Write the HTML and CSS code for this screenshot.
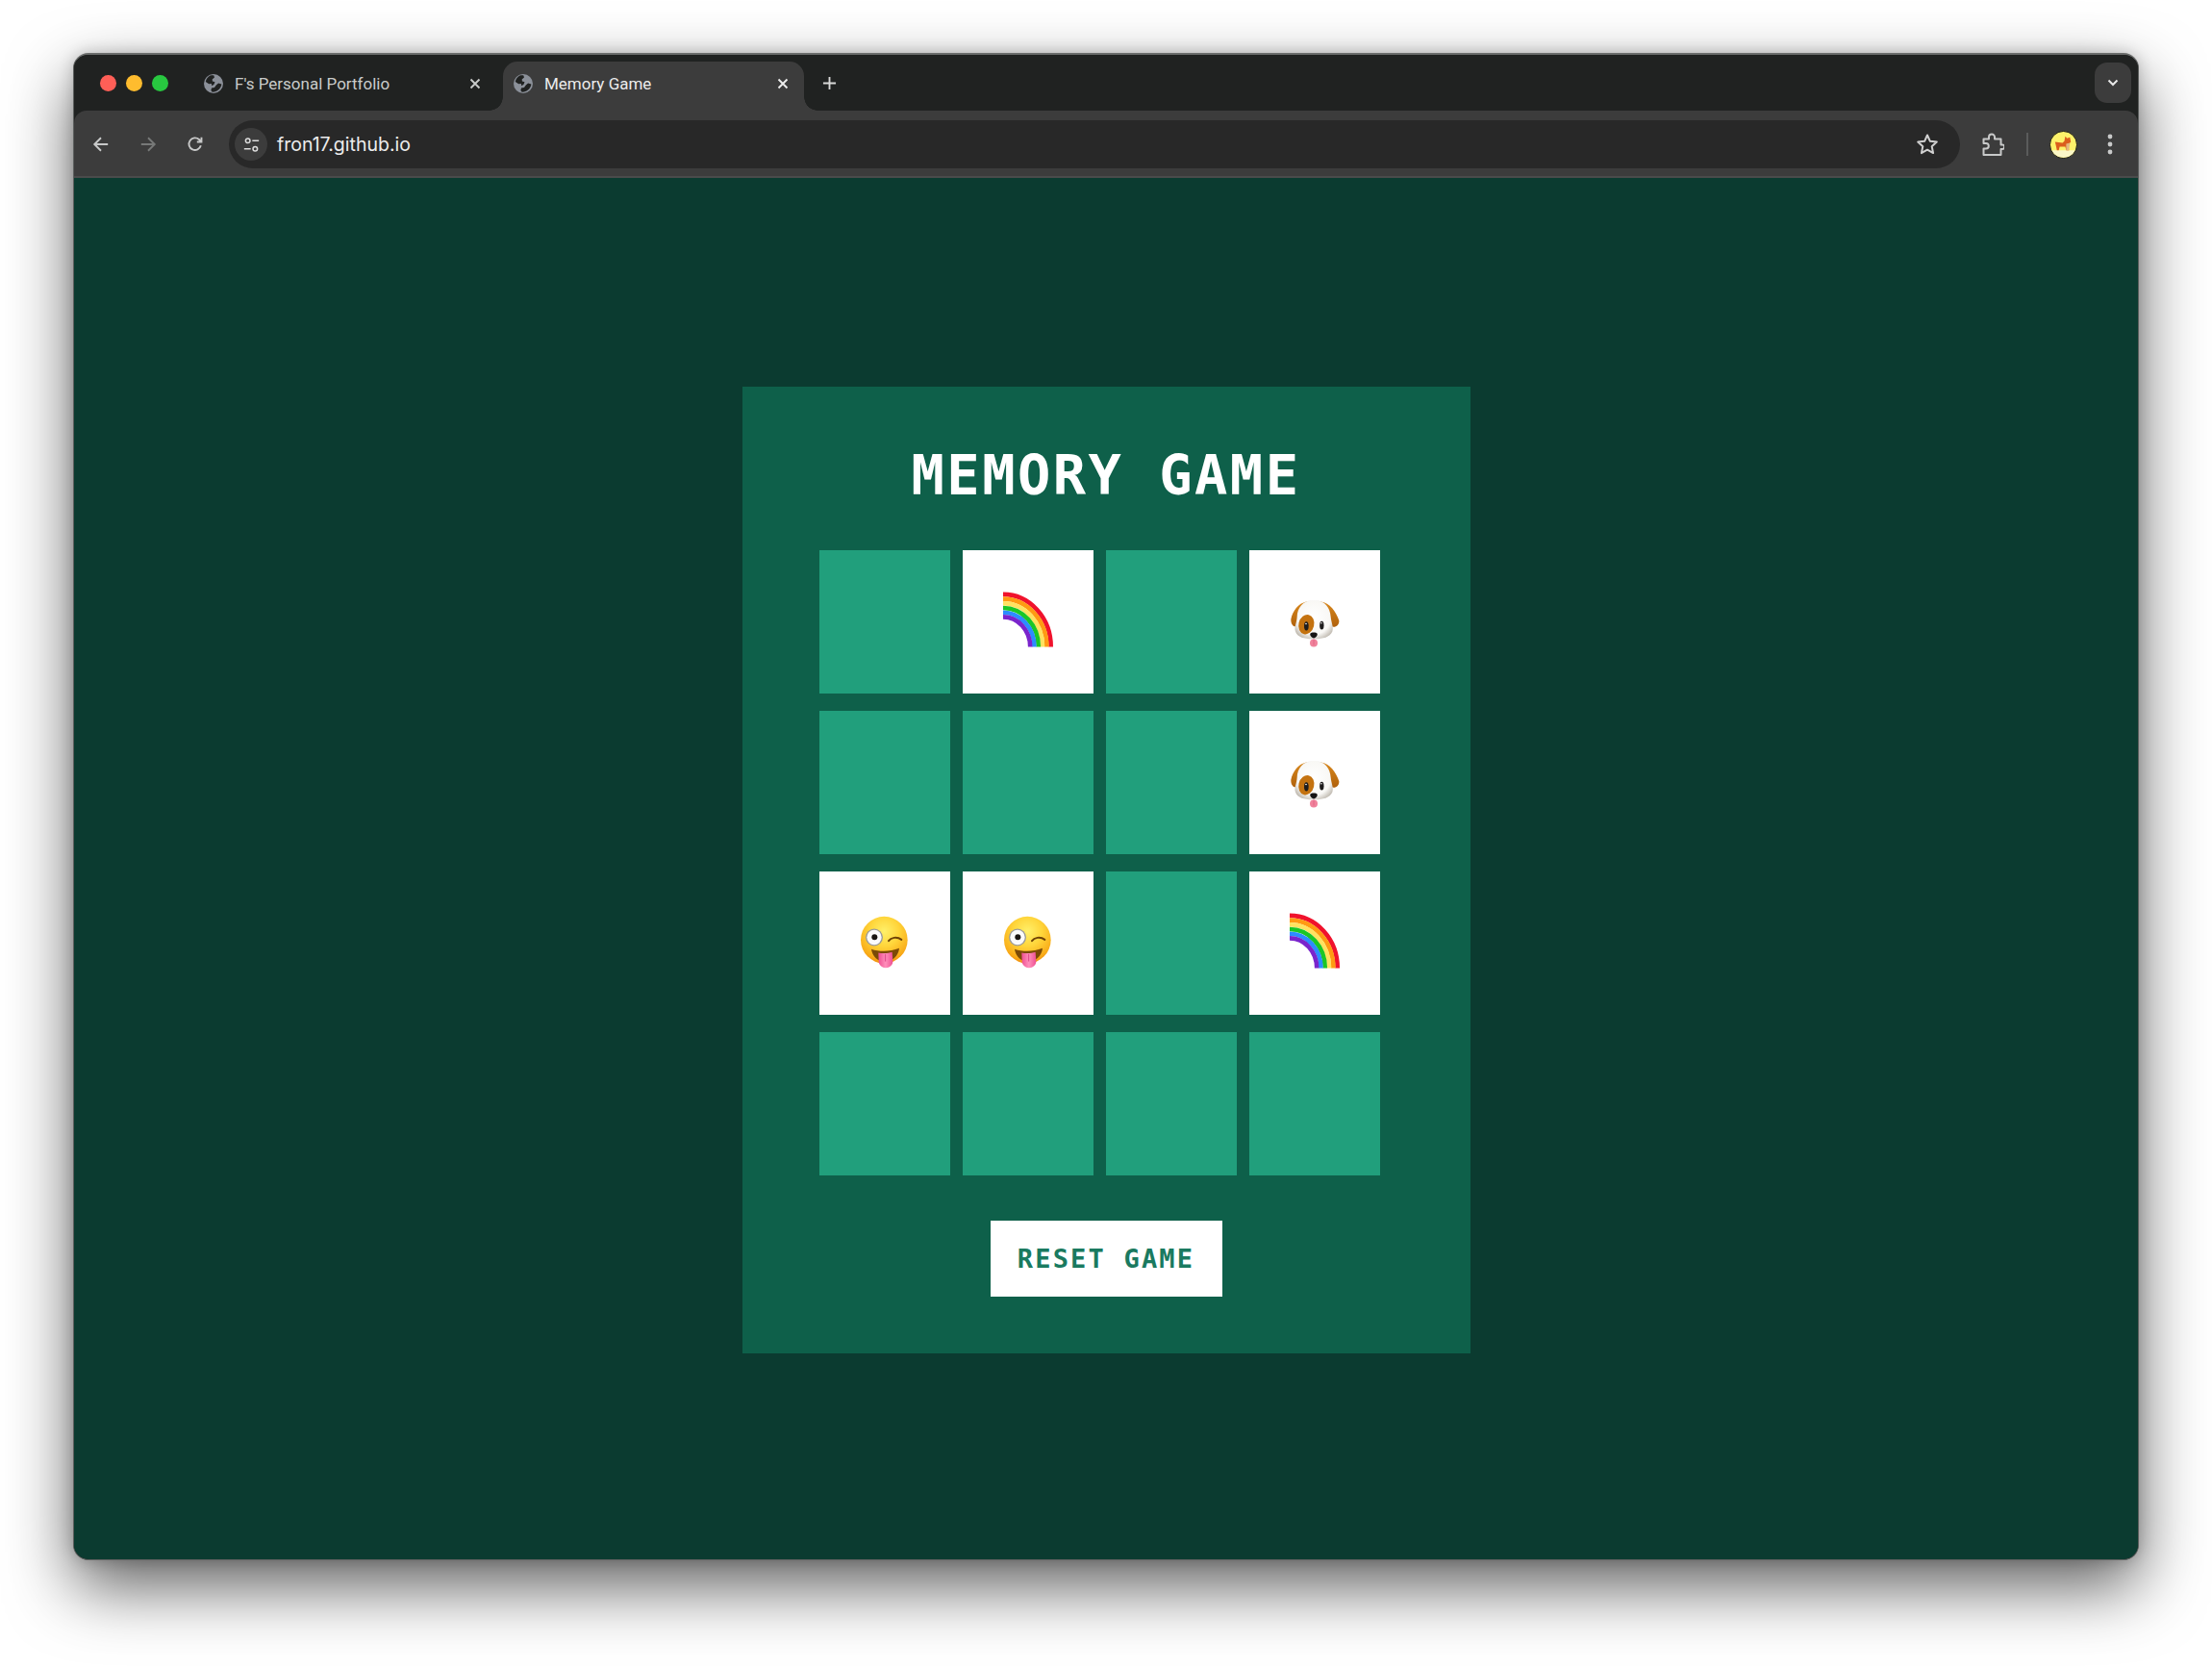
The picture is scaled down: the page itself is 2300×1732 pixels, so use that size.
FILE: index.html
```html
<!DOCTYPE html>
<html lang="en">
<head>
<meta charset="utf-8">
<title>Memory Game</title>
<link rel="stylesheet" href="styles.css">
</head>
<body>
<svg class="defs" width="0" height="0" aria-hidden="true">
  <defs>
    <radialGradient id="faceGrad" cx="50%" cy="32%" r="70%">
      <stop offset="0" stop-color="#fff06a"/>
      <stop offset=".45" stop-color="#ffd53a"/>
      <stop offset=".85" stop-color="#f9ab18"/>
      <stop offset="1" stop-color="#ee8a0c"/>
    </radialGradient>
    <linearGradient id="tongueGrad" x1="0" x2="1" y1="0" y2="0">
      <stop offset="0" stop-color="#ee4f92"/>
      <stop offset=".5" stop-color="#ff8fbb"/>
      <stop offset="1" stop-color="#ee4f92"/>
    </linearGradient>
    <radialGradient id="headGrad" cx="50%" cy="45%" r="62%">
      <stop offset="0" stop-color="#ffffff"/>
      <stop offset=".7" stop-color="#f9f8f5"/>
      <stop offset="1" stop-color="#bdb7ad"/>
    </radialGradient>
    <linearGradient id="earGrad" x1="0" x2="0" y1="0" y2="1">
      <stop offset="0" stop-color="#d9881c"/>
      <stop offset="1" stop-color="#b0610c"/>
    </linearGradient>
    <symbol id="globe" viewBox="0 0 20 20">
      <circle cx="10" cy="10" r="10" fill="#8b9099"/>
      <path d="M6.500 1.600C4 3 2.200 5.200 1.800 8l3.400 2.200 2.600-.2.500 2.300 2.200-1.500 1-2.600-2.600-.7-.2-2L11 3.600 10.400 1.400C9 1.300 7.600 1.400 6.500 1.600Z" fill="#202221"/>
      <path d="M18.400 10.600l-3.300-1.100-2.300 2-1.800 2.400-3 .6-.6 2.500 1 1.600c3.800.6 9.100-2.100 10-8Z" fill="#202221"/>
    </symbol>
    <symbol id="rainbow" viewBox="-5 -5 70 70">
      <g fill="none">
        <path d="M4 1.900A49.700 54.600 0 0 1 53.700 56.500" stroke="#f0122c" stroke-width="4.600"/>
        <path d="M4 6.600A45.400 49.900 0 0 1 49.400 56.500" stroke="#ff9a12" stroke-width="4.600"/>
        <path d="M4 11.300A41.100 45.200 0 0 1 45.100 56.500" stroke="#ffe260" stroke-width="4.600"/>
        <path d="M4 16A36.800 40.500 0 0 1 40.800 56.500" stroke="#1bc625" stroke-width="4.600"/>
        <path d="M4 20.700A32.500 35.800 0 0 1 36.500 56.500" stroke="#2c8cff" stroke-width="4.600"/>
        <path d="M4 25.400A28.200 31.100 0 0 1 32.200 56.500" stroke="#7a24cc" stroke-width="4.600"/>
      </g>
    </symbol>
    <symbol id="dog" viewBox="6 -10.5 210 210">
      <path d="M85 33C60 38 42 62 37 88C36 104 46 115 57 110C62 90 66 62 94 36Z" fill="url(#earGrad)"/>
      <path d="M130 33C158 36 178 65 187 92C188 107 175 115 163 110C159 85 150 58 124 36Z" fill="url(#earGrad)"/>
      <path d="M108 29C142 27 159 50 161 80C163 100 171 112 166 126C158 146 130 150 108 149C85 150 57 146 51 126C46 110 55 100 56 80C57 50 76 27 108 29Z" fill="url(#headGrad)"/>
      <ellipse cx="85" cy="104" rx="24" ry="31" transform="rotate(14 85 104)" fill="#c4720f"/>
      <ellipse cx="85" cy="109" rx="7" ry="14" fill="#1e1c1c"/>
      <circle cx="84" cy="102" r="2.500" fill="#fff"/>
      <ellipse cx="133" cy="107" rx="6.500" ry="13" fill="#1e1c1c"/>
      <circle cx="132" cy="100" r="2.300" fill="#fff"/>
      <ellipse cx="108" cy="162" rx="12" ry="12" fill="#f0829b"/>
      <path d="M108 150V168" stroke="#d95c7b" stroke-width="2"/>
      <path d="M97 133C100 128 116 128 119 133C121 140 112 147 108 147C104 147 95 140 97 133Z" fill="#161414"/>
    </symbol>
    <symbol id="wink" viewBox="0 1.5 210 210">
      <circle cx="103" cy="98" r="73" fill="url(#faceGrad)"/>
      <path d="M63 127C90 136 122 135 150 124C148 148 128 166 106 166C84 166 66 150 63 127Z" fill="#7b4a07"/>
      <path d="M85 138C98 141 116 140 128 136L130 165C130 177 120 185 108 185C96 185 87 177 86 165Z" fill="url(#tongueGrad)"/>
      <path d="M107 142V165" stroke="#d4367c" stroke-width="2.500"/>
      <circle cx="72" cy="90" r="27" fill="#9a9a9a"/>
      <circle cx="72" cy="90" r="23" fill="#fbfbfb"/>
      <circle cx="73" cy="89" r="9" fill="#191512"/>
      <path d="M117 101C124 91 142 86 157 97" fill="none" stroke="#6e4206" stroke-width="6" stroke-linecap="round"/>
    </symbol>
  </defs>
</svg>

<div class="window">
  <header class="tabstrip">
    <div class="lights">
      <span class="light light-red"></span>
      <span class="light light-yellow"></span>
      <span class="light light-green"></span>
    </div>
    <div class="tab">
      <svg class="globe"><use href="#globe"/></svg>
      <span class="tab-title">F's Personal Portfolio</span>
      <svg class="tab-close" viewBox="0 0 12 12"><path d="M1.500 1.500l9 9M10.500 1.500l-9 9"/></svg>
    </div>
    <div class="tab tab-active">
      <svg class="globe"><use href="#globe"/></svg>
      <span class="tab-title">Memory Game</span>
      <svg class="tab-close" viewBox="0 0 12 12"><path d="M1.500 1.500l9 9M10.500 1.500l-9 9"/></svg>
    </div>
    <svg class="new-tab" viewBox="0 0 16 16"><path d="M8 1v14M1 8h14"/></svg>
    <div class="tab-menu">
      <svg class="tab-menu-icon" viewBox="0 0 12 8"><path d="M1.500 1.500L6 6l4.500-4.500"/></svg>
    </div>
  </header>

  <nav class="toolbar">
    <svg class="nav-icon" viewBox="0 0 20 20"><path d="M18 10H3M10 2.500L2.500 10l7.500 7.500"/></svg>
    <svg class="nav-icon nav-dim" viewBox="0 0 20 20"><path d="M2 10h15M10 2.500l7.500 7.500-7.500 7.500"/></svg>
    <svg class="nav-icon" viewBox="0 0 20 20"><path d="M16.500 11.500A7 7 0 1 1 14.500 4.500L17 7M17.200 2v5.200H12"/></svg>
    <div class="omnibox">
      <span class="tune">
        <svg class="tune-icon" viewBox="0 0 20 20"><circle cx="5.500" cy="5" r="2.700"/><path d="M11 5h8M1 15h8"/><circle cx="14.500" cy="15" r="2.700"/></svg>
      </span>
      <span class="url">fron17.github.io</span>
      <svg class="star" viewBox="0 0 24 24"><path d="M12 2.500l2.900 6.300 6.900.8-5.100 4.700 1.400 6.800-6.100-3.400-6.100 3.400 1.400-6.800-5.100-4.700 6.900-.8Z"/></svg>
    </div>
    <svg class="ext" viewBox="0 0 24 26"><path d="M2.500 7.500H8V5.500a3 3 0 0 1 6 0v2h6.500v6h1.500a2.200 2.200 0 0 1 0 4.400h-1.500v6H2.500v-6.400H5a2.800 2.800 0 0 0 0-5.600H2.500Z"/></svg>
    <span class="divider"></span>
    <svg class="avatar" viewBox="0 0 30 30">
      <circle cx="15" cy="15" r="14.500" fill="#fdf16a" stroke="#141414"/>
      <path d="M2.500 21h25a14 14 0 0 1-25 0Z" fill="#fbf7c8"/>
      <path d="M6 12l8 1 2-2 1-5 2 2 3-1 1 5-3 3 1 6h-3l-1-4-6 0-1 4H8l-1-5Z" fill="#db5e1c"/>
      <path d="M18 14l4-1-1 8h-3Z" fill="#e3b77e"/>
    </svg>
    <svg class="dots" viewBox="0 0 6 22"><circle cx="3" cy="3" r="2.400"/><circle cx="3" cy="11" r="2.400"/><circle cx="3" cy="19" r="2.400"/></svg>
  </nav>

  <main class="page">
    <section class="panel">
      <h1 class="title">MEMORY GAME</h1>
      <div class="grid">
        <div class="card"></div>
        <div class="card card-open"><svg class="emoji"><use href="#rainbow"/></svg></div>
        <div class="card"></div>
        <div class="card card-open"><svg class="emoji"><use href="#dog"/></svg></div>
        <div class="card"></div>
        <div class="card"></div>
        <div class="card"></div>
        <div class="card card-open"><svg class="emoji"><use href="#dog"/></svg></div>
        <div class="card card-open"><svg class="emoji"><use href="#wink"/></svg></div>
        <div class="card card-open"><svg class="emoji"><use href="#wink"/></svg></div>
        <div class="card"></div>
        <div class="card card-open"><svg class="emoji"><use href="#rainbow"/></svg></div>
        <div class="card"></div>
        <div class="card"></div>
        <div class="card"></div>
        <div class="card"></div>
      </div>
      <button class="reset" type="button">RESET GAME</button>
    </section>
  </main>
</div>
</body>
</html>
```

FILE: styles.css
```css
* { box-sizing: border-box; }

html, body { margin: 0; height: 100%; }

body {
  background: #ffffff;
  padding: 55px 76px 0;
  overflow: hidden;
  font-family: "Inter", "Liberation Sans", sans-serif;
}

.defs { display: block; }

.window {
  width: 2148px;
  height: 1567px;
  display: flex;
  flex-direction: column;
  border-radius: 16px;
  overflow: hidden;
  background: #202221;
  border: 1px solid #5c5f5e;
  border-top: 2px solid #6b6d6c;
  box-shadow: 0 28px 68px rgba(0, 0, 0, 0.62), 0 0 16px rgba(0, 0, 0, 0.2);
}

/* tab strip */
.tabstrip {
  height: 58px;
  flex: none;
  display: flex;
  align-items: flex-start;
  padding-left: 27px;
  background: #202221;
}

.lights {
  display: flex;
  gap: 10px;
  margin-top: 21px;
  width: 99px;
  flex: none;
}

.light {
  width: 17px;
  height: 17px;
  border-radius: 50%;
}
.light-red { background: #ff5f57; }
.light-yellow { background: #febc2e; }
.light-green { background: #28c840; }

.tab {
  width: 320px;
  height: 51px;
  margin-top: 7px;
  flex: none;
  display: flex;
  align-items: center;
  padding: 0 23px 6px 9px;
  color: #c9cbca;
  position: relative;
}

.tab-active {
  width: 313px;
  background: #3c3c3c;
  color: #ececec;
  border-radius: 15px 15px 0 0;
  padding-left: 11px;
  padding-right: 16px;
}

.tab-active::before,
.tab-active::after {
  content: "";
  position: absolute;
  bottom: 0;
  width: 14px;
  height: 14px;
}
.tab-active::before {
  right: 100%;
  background: radial-gradient(circle at 0 0, transparent 13.500px, #3c3c3c 14px);
}
.tab-active::after {
  left: 100%;
  background: radial-gradient(circle at 100% 0, transparent 13.500px, #3c3c3c 14px);
}

.globe {
  width: 20px;
  height: 20px;
  flex: none;
}

.tab-title {
  font-family: "Roboto", "Inter", sans-serif;
  font-size: 17px;
  margin-left: 12px;
  flex: 1;
  white-space: nowrap;
}

.tab-close {
  width: 12px;
  height: 12px;
  flex: none;
  fill: none;
  stroke: currentColor;
  stroke-width: 1.900;
}

.new-tab {
  width: 15px;
  height: 15px;
  flex: none;
  margin: 22px 0 0 19px;
  fill: none;
  stroke: #d8d8d8;
  stroke-width: 2;
}

.tab-menu {
  margin: 8px 7px 0 auto;
  width: 38px;
  height: 42px;
  border-radius: 13px;
  background: #3c3c3c;
  display: flex;
  align-items: center;
  justify-content: center;
}

.tab-menu-icon {
  width: 12px;
  height: 8px;
  fill: none;
  stroke: #e8e8e8;
  stroke-width: 2;
}

/* toolbar */
.toolbar {
  height: 70px;
  flex: none;
  display: flex;
  align-items: center;
  background: #3c3c3c;
  border-radius: 13px 13px 0 0;
  border-bottom: 2px solid #4a4b4b;
  padding: 2px 0 0 19px;
}

.nav-icon {
  width: 18px;
  height: 18px;
  flex: none;
  margin-right: 31px;
  fill: none;
  stroke: #c8c9c9;
  stroke-width: 2.100;
}

.nav-dim { stroke: #777978; }

.omnibox {
  width: 1800px;
  height: 50px;
  margin-left: -5px;
  flex: none;
  display: flex;
  align-items: center;
  background: #282828;
  border-radius: 25px;
  padding: 0 22px 0 6px;
}

.tune {
  width: 34px;
  height: 34px;
  border-radius: 50%;
  background: #3c3c3c;
  display: flex;
  align-items: center;
  justify-content: center;
  flex: none;
}

.tune-icon {
  width: 17px;
  height: 17px;
  fill: none;
  stroke: #dcdcdc;
  stroke-width: 1.800;
}

.url {
  font-size: 19.500px;
  color: #ececec;
  margin-left: 10px;
  flex: 1;
}

.star {
  width: 24px;
  height: 24px;
  flex: none;
  fill: none;
  stroke: #d0d0d0;
  stroke-width: 2;
  stroke-linejoin: round;
}

.ext {
  width: 24px;
  height: 26px;
  flex: none;
  margin-left: 22px;
  fill: none;
  stroke: #c8c9c9;
  stroke-width: 2;
  stroke-linejoin: round;
}

.divider {
  width: 2px;
  height: 24px;
  background: #5a5b5b;
  flex: none;
  margin-left: 23px;
}

.avatar {
  width: 29px;
  height: 29px;
  flex: none;
  margin-left: 22px;
}

.dots {
  width: 6px;
  height: 22px;
  flex: none;
  margin-left: 31px;
  fill: #c8c9c9;
}

/* page */
.page {
  flex: 1;
  background: #0b3b30;
  display: flex;
  align-items: center;
  justify-content: center;
}

.panel {
  width: 757px;
  height: 1005px;
  background: #0e604a;
  display: flex;
  flex-direction: column;
  align-items: center;
  padding-top: 57px;
  margin-top: 2px;
}

.title {
  margin: 0 0 43px;
  height: 70px;
  font: bold 57px/70px "DejaVu Sans Mono", "Liberation Mono", monospace;
  letter-spacing: 2.500px;
  color: #ffffff;
}

.grid {
  display: grid;
  grid-template-columns: repeat(4, 136px);
  grid-auto-rows: 149px;
  column-gap: 13px;
  row-gap: 18px;
  padding-right: 13px;
}

.card {
  background: #219f7c;
  display: flex;
  align-items: center;
  justify-content: center;
}

.card-open { background: #ffffff; }

.emoji {
  width: 70px;
  height: 70px;
  overflow: visible;
}

.reset {
  margin-top: 47px;
  width: 241px;
  height: 79px;
  background: #ffffff;
  border: 0;
  padding: 0;
  font: bold 27px "DejaVu Sans Mono", "Liberation Mono", monospace;
  letter-spacing: 2.200px;
  color: #1a7a60;
}
```
